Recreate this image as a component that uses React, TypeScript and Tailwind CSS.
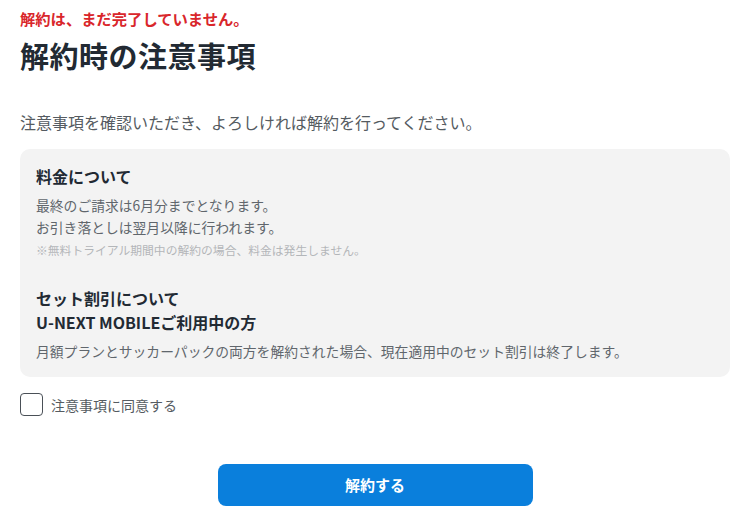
import React from 'react';

export default function App() {
    return (
        <div
            className="w-[740px] bg-white pl-5 pr-[10px] pt-[8px] text-[#222a33]"
            style={{ fontFamily: '"Noto Sans CJK JP", "Noto Sans", sans-serif' }}
        >
            <p className="text-[15.3px] font-bold leading-[20px] text-[#d9262b]">解約は、まだ完了していません。</p>
            <h1 className="mt-[7px] text-[29px] font-bold leading-[40px] tracking-[0.5px]">解約時の注意事項</h1>

            <p className="mt-[35px] text-[16px] leading-[24px] text-[#555b61]">
                注意事項を確認いただき、よろしければ解約を行ってください。
            </p>

            {/* 注意事項ボックス */}
            <div className="mt-[15px] rounded-[10px] bg-[#f3f3f3] px-4 pt-[14px] pb-[15px]">
                <h2 className="text-[16px] font-bold leading-[26px]">料金について</h2>
                <p className="mt-[5px] text-[13.8px] leading-[22px] text-[#60666c]">
                    最終のご請求は6月分までとなります。
                    <br />
                    お引き落としは翌月以降に行われます。
                </p>
                <p className="mt-[2px] text-[11.8px] leading-[20px] text-[#b3b6b9]">
                    ※無料トライアル期間中の解約の場合、料金は発生しません。
                </p>

                <h2 className="mt-[26px] text-[16px] font-bold leading-[24px]">セット割引について</h2>
                <h3 className="text-[16px] font-bold leading-[24px]">U-NEXT MOBILEご利用中の方</h3>
                <p className="mt-[6px] text-[13.8px] leading-[22px] text-[#60666c]">
                    月額プランとサッカーパックの両方を解約された場合、現在適用中のセット割引は終了します。
                </p>
            </div>

            <label className="mt-[16px] flex items-center gap-[8px]">
                <span className="h-[23px] w-[23px] rounded-[4px] border-[1.5px] border-[#4a5057] bg-white" />
                <span className="text-[14px] leading-[22px] text-[#555b61]">注意事項に同意する</span>
            </label>

            <div className="mt-[48px] flex justify-center pb-[4px]">
                <button className="h-[42px] w-[315px] rounded-[8px] bg-[#0a7fdc] text-[15px] font-bold text-white">
                    解約する
                </button>
            </div>
        </div>
    );
}
